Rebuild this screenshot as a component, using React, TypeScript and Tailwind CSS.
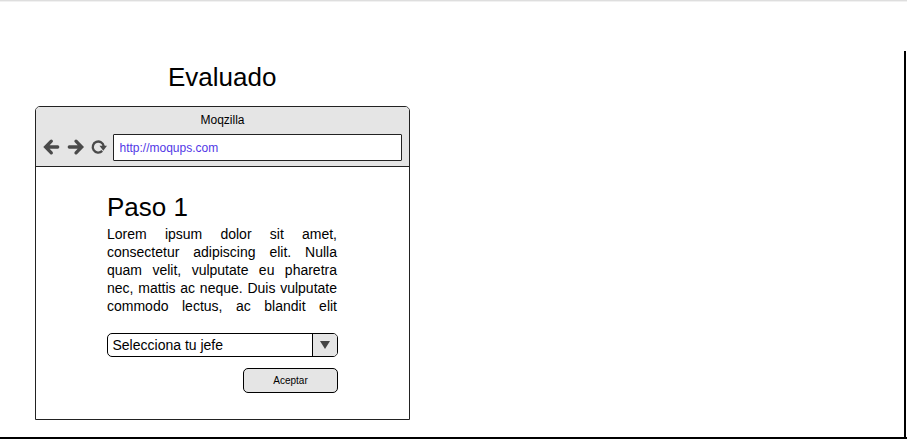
export default function App() {
  return (
    <div className="flex h-[439px] w-[907px] flex-col overflow-hidden border-b-2 border-black bg-white font-['Liberation_Sans',Arial,sans-serif] text-black">
      <div className="h-[51px] shrink-0 border-t border-[#dedede]">
        <div className="h-px bg-[#f1f1f1]" />
      </div>
      <main className="w-[906px] flex-1 border-r-2 border-black pl-[35px]">
        <h1 className="h-[55px] w-[374.500px] text-center text-[26px] leading-[52px]">Evaluado</h1>
        <section className="h-[314px] w-[375px] rounded-t-[5px] border border-[#222]">
          <header className="h-[60px] rounded-t-[4px] border-b border-[#222] bg-[#e5e5e5]">
            <div className="h-[27px] text-center text-[12px] leading-[26px]">Moqzilla</div>
            <div className="flex h-[27px] items-center pr-[7px]">
              <svg className="h-[27px] w-[77px] shrink-0" viewBox="0 0 77 27" fill="none" stroke="#4a4a4a" strokeWidth="3.3">
                <g strokeLinecap="round">
                  <path d="M15.300 7.200 9.600 13l5.700 5.800M10 13H21.700" />
                  <path d="M40 7.200 45.700 13l-5.700 5.800M45.300 13H33.300" />
                </g>
                <path d="M66.200 16.900a5.500 5.500 0 1 1 1.500-4.700" strokeWidth="2.300" />
                <path d="M63.500 11.800h7.500l-3.750 4.900z" fill="#4a4a4a" stroke="none" />
              </svg>
              <div className="h-[27px] flex-1 rounded-[1px] border border-[#222] bg-white pl-[5.500px] text-[12px] leading-[26px] text-[#5238e6]">http://moqups.com</div>
            </div>
          </header>
          <div className="pt-[25px] pr-[71px] pl-[71px]">
            <h2 className="h-[33px] text-[26px] leading-[31px]">Paso 1</h2>
            <p className="h-[90px] w-[230px] text-justify text-[14px] leading-[18px] [text-align-last:justify]">Lorem ipsum dolor sit amet, consectetur adipiscing elit. Nulla quam velit, vulputate eu pharetra nec, mattis ac neque. Duis vulputate commodo lectus, ac blandit elit</p>
            <div className="mt-[18px] flex h-[24px] w-[231px] overflow-hidden rounded-[5px] border border-black">
              <span className="flex-1 pl-[4.500px] text-[14px] leading-[22px]">Selecciona tu jefe</span>
              <span className="flex w-[25px] items-center justify-center border-l border-black bg-[#e5e5e5]">
                <svg width="10" height="8" viewBox="0 0 10 8"><path d="M0 0h10L5 8z" fill="#444" /></svg>
              </span>
            </div>
            <button className="mt-[11px] ml-[136px] block h-[25px] w-[95px] rounded-[5px] border border-black bg-[#e5e5e5] text-[10px] leading-[23px]">Aceptar</button>
          </div>
        </section>
      </main>
    </div>
  );
}
